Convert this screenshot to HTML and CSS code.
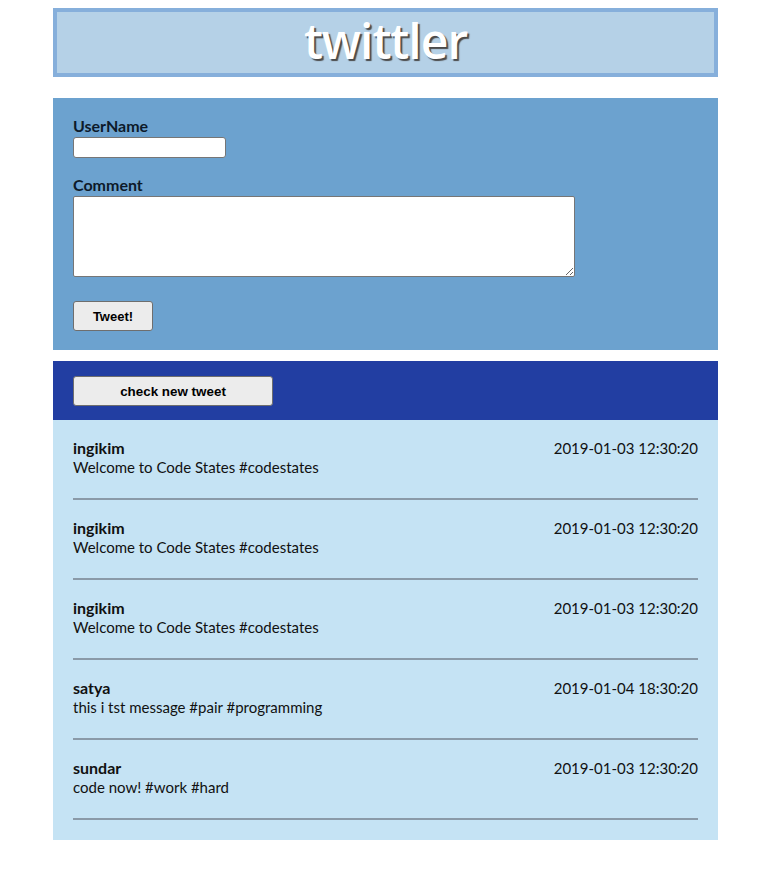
FILE: index.html
```html
<!DOCTYPE html>
<html lang="en">
<head>
<meta charset="utf-8">
<title>twittler</title>
<link rel="stylesheet" href="styles.css">
</head>
<body>
<div class="page">
  <header class="masthead">
    <h1 class="logo">twittler</h1>
  </header>

  <form class="composer">
    <label class="field-label" for="username">UserName</label>
    <input class="username-input" id="username" type="text">
    <label class="field-label comment-label" for="comment">Comment</label>
    <textarea class="comment-input" id="comment"></textarea>
    <button class="btn tweet-btn" type="button">Tweet!</button>
  </form>

  <section class="feed">
    <div class="feed-bar">
      <button class="btn refresh-btn" type="button">check new tweet</button>
    </div>
    <ul class="tweets">
      <li class="tweet">
        <div class="tweet-head"><span class="user">ingikim</span><span class="time">2019-01-03 12:30:20</span></div>
        <div class="message">Welcome to Code States #codestates</div>
      </li>
      <li class="tweet">
        <div class="tweet-head"><span class="user">ingikim</span><span class="time">2019-01-03 12:30:20</span></div>
        <div class="message">Welcome to Code States #codestates</div>
      </li>
      <li class="tweet">
        <div class="tweet-head"><span class="user">ingikim</span><span class="time">2019-01-03 12:30:20</span></div>
        <div class="message">Welcome to Code States #codestates</div>
      </li>
      <li class="tweet">
        <div class="tweet-head"><span class="user">satya</span><span class="time">2019-01-04 18:30:20</span></div>
        <div class="message">this i tst message #pair #programming</div>
      </li>
      <li class="tweet">
        <div class="tweet-head"><span class="user">sundar</span><span class="time">2019-01-03 12:30:20</span></div>
        <div class="message">code now! #work #hard</div>
      </li>
    </ul>
  </section>
</div>
</body>
</html>
```

FILE: styles.css
```css
* { box-sizing: border-box; }

body {
  margin: 8px;
  background: #ffffff;
  font-family: "Lato", "Noto Sans", sans-serif;
  color: #111111;
}

.page {
  width: 665px;
  margin-left: 45px;
}

.masthead {
  height: 69px;
  background: #b5d1e7;
  border: 4px solid #86afdb;
  display: flex;
  align-items: center;
  justify-content: center;
}

.logo {
  margin: -3px 0 0;
  font-family: "Open Sans", "Noto Sans", sans-serif;
  font-weight: 600;
  font-size: 48px;
  line-height: 1;
  color: #ffffff;
  letter-spacing: -1px;
  text-shadow: 2px 2px 1px #4a4a4a;
}

.composer {
  margin-top: 21px;
  background: #6ca2cf;
  padding: 20px 20px 19px;
  display: flex;
  flex-direction: column;
  align-items: flex-start;
}

.field-label {
  font-weight: 700;
  font-size: 16px;
  line-height: 16px;
  margin-bottom: 3px;
  color: #0d1a2a;
}

.comment-label { margin-top: 19px; }

.username-input {
  width: 153px;
  height: 21px;
  border: 1px solid #767676;
  border-radius: 3px;
  background: #fff;
  margin: 0;
}

.comment-input {
  width: 502px;
  height: 81px;
  border: 1px solid #767676;
  border-radius: 2px;
  background: #fff;
  margin: 0;
  resize: both;
}

.btn {
  font-family: "Liberation Sans", Arial, sans-serif;
  font-weight: 700;
  color: #000;
  background: #ececec;
  border: 1px solid #6e6e6e;
  border-radius: 3px;
  height: 30px;
  padding: 0;
}

.tweet-btn {
  width: 80px;
  font-size: 13px;
  margin-top: 24px;
}

.feed { margin-top: 11px; }

.feed-bar {
  background: #223ea2;
  height: 59px;
  padding: 15px 20px 0;
}

.refresh-btn {
  width: 200px;
  font-size: 13.4px;
}

.tweets {
  list-style: none;
  margin: 0;
  padding: 0 20px 20px;
  background: #c5e3f4;
}

.tweet {
  height: 80px;
  padding-top: 18px;
  border-bottom: 2px solid #8a9aa8;
}

.tweet-head {
  display: flex;
  justify-content: space-between;
  align-items: baseline;
  font-size: 16px;
  line-height: 19px;
}

.user { font-weight: 700; }

.time { font-size: 15px; }

.message {
  font-size: 15px;
  line-height: 19px;
}
```
